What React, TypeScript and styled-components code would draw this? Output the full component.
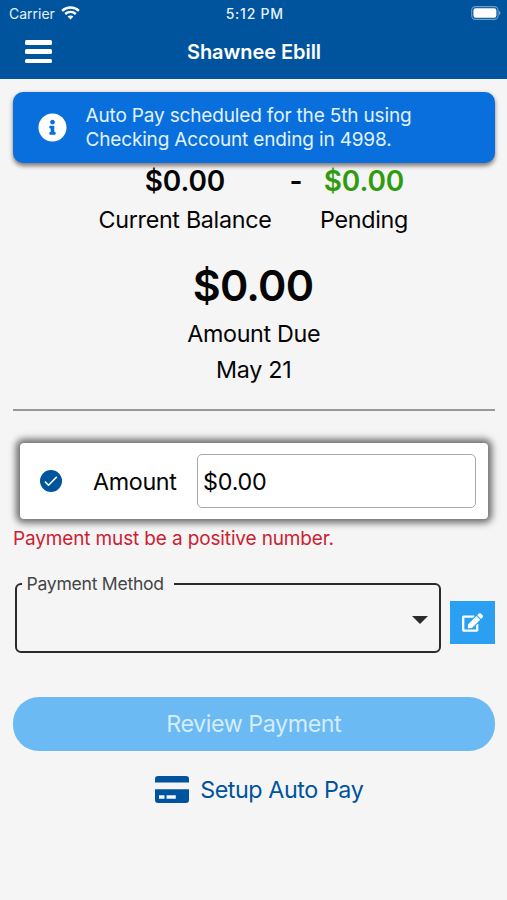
import React from "react";
import styled, { createGlobalStyle } from "styled-components";
import { FaEdit, FaInfoCircle } from "react-icons/fa";

const GlobalStyle = createGlobalStyle`
  *, *::before, *::after { box-sizing: border-box; }
  body {
    margin: 0;
    background: #f5f5f5;
    font-family: Inter, "Liberation Sans", sans-serif;
    color: #050505;
  }
`;

const Screen = styled.div`
  width: 507px;
  height: 900px;
  overflow: hidden;
  background: #f5f5f5;
  display: flex;
  flex-direction: column;
`;

const Header = styled.header`
  height: 79px;
  flex: none;
  background: #00539d;
  color: #fff;
`;

const StatusBar = styled.div`
  height: 26px;
  padding: 0 6.5px 0 9px;
  display: grid;
  grid-template-columns: 1fr auto 1fr;
  align-items: center;
  font-size: 14px;
  color: #e6f1fb;
`;

const Carrier = styled.span`
  display: flex;
  align-items: center;
  gap: 6px;
  padding-top: 1px;
`;

const Clock = styled.span`
  padding-top: 1px;
  font-weight: 500;
  letter-spacing: 0.75px;
`;

const BatteryIcon = styled.svg`
  justify-self: end;
`;

const NavBar = styled.div`
  height: 51px;
  padding: 0 25px;
  display: grid;
  grid-template-columns: 27px 1fr 27px;
  align-items: center;
`;

const MenuButton = styled.button`
  border: 0;
  padding: 0;
  height: 23px;
  background: none;
  display: flex;
  flex-direction: column;
  justify-content: space-between;

  span {
    width: 26.5px;
    height: 4.5px;
    border-radius: 1.5px;
    background: #fff;
  }
`;

const Title = styled.h1`
  margin: 0 0 0 1px;
  text-align: center;
  font-size: 20px;
  line-height: 26px;
  font-weight: 600;
  letter-spacing: -0.05px;
`;

const Content = styled.main`
  padding: 12.5px 12.5px 0 13px;
  display: flex;
  flex-direction: column;
`;

const Alert = styled.section`
  height: 71px;
  padding-left: 25px;
  display: flex;
  align-items: center;
  gap: 18.5px;
  border-radius: 10px;
  background: #096fdc;
  color: #e2f2ff;
  box-shadow: 0 2.5px 4px rgba(60, 40, 40, 0.6);
`;

const AlertText = styled.p`
  margin: 0;
  padding-top: 1px;
  font-size: 19px;
  line-height: 23.5px;
  letter-spacing: -0.16px;
`;

const Balances = styled.div`
  height: 77px;
  display: grid;
  grid-template-columns: 172px 50px 86px;
  justify-content: center;
  padding-right: 1.5px;
`;

const Balance = styled.div`
  display: flex;
  flex-direction: column;
  align-items: center;
`;

const Value = styled.span<{ $color?: string }>`
  height: 39px;
  line-height: 36px;
  font-size: 28px;
  font-weight: 600;
  letter-spacing: -0.1px;
  color: ${(p) => p.$color ?? "inherit"};
`;

const Caption = styled.span`
  height: 36.5px;
  line-height: 36.5px;
  font-size: 23.3px;
  white-space: nowrap;
  letter-spacing: -0.31px;
`;

const AmountDue = styled.div`
  height: 169px;
  padding-top: 18px;
  display: flex;
  flex-direction: column;
  align-items: center;
`;

const Total = styled.strong`
  height: 58px;
  line-height: 54px;
  margin-right: 1.5px;
  font-size: 43px;
  font-weight: 600;
  letter-spacing: -0.75px;
`;

const Divider = styled.hr`
  width: 100%;
  height: 2.5px;
  margin: 0;
  border: 0;
  background: #999;
`;

const AmountCard = styled.section`
  height: 76px;
  margin: 32px 7px 0;
  padding: 0 12px 0 20px;
  display: flex;
  align-items: center;
  border-radius: 4px;
  background: #fff;
  box-shadow: 0 0 7px 3.5px rgba(0, 0, 0, 0.56);
`;

const AmountLabel = styled.label`
  width: 104px;
  margin-left: 31px;
  font-size: 23.3px;
  letter-spacing: -0.35px;
`;

const AmountInput = styled.input`
  flex: 1;
  min-width: 0;
  height: 54px;
  padding: 0 5px;
  border: 1.5px solid #aaa;
  border-radius: 5px;
  background: #fff;
  color: #050505;
  font: 400 23.3px Inter, "Liberation Sans", sans-serif;
  letter-spacing: -0.2px;
  outline: none;
`;

const ErrorText = styled.p`
  height: 24px;
  margin: 7.5px 0 0;
  font-size: 19px;
  line-height: 24px;
  letter-spacing: -0.14px;
  color: #cb2233;
`;

const MethodRow = styled.div`
  margin: 21.5px 0 0 1.5px;
  display: flex;
  gap: 9px;
`;

const MethodField = styled.fieldset`
  width: 426px;
  height: 81px;
  margin: 0;
  padding: 0 11px 8px 5px;
  border: 2.4px solid #2b2b2d;
  border-radius: 6px;
  display: flex;
  align-items: center;
  justify-content: flex-end;
`;

const MethodLegend = styled.legend`
  width: 152px;
  height: 24px;
  padding: 0 0 0 5px;
  font-size: 17.6px;
  line-height: 24px;
  letter-spacing: -0.27px;
  color: #454547;
`;

const EditButton = styled.button`
  width: 45px;
  height: 43px;
  margin-top: 28.5px;
  padding: 0;
  border: 0;
  display: grid;
  place-items: center;
  background: #2b9ff1;
  color: #fff;
`;

const ReviewButton = styled.button`
  height: 53.5px;
  margin-top: 44px;
  padding: 0;
  border: 0;
  border-radius: 26px;
  background: #6bbaf3;
  color: #d5ecfc;
  font: 400 23.3px Inter, "Liberation Sans", sans-serif;
  letter-spacing: -0.45px;
`;

const AutoPayLink = styled.a`
  margin-top: 23px;
  height: 31px;
  display: flex;
  justify-content: center;
  align-items: center;
  gap: 11.5px;
  padding-left: 10.5px;
  color: #00539d;
  font-size: 23.3px;
  letter-spacing: -0.43px;
`;

const WifiIcon = () => (
  <svg width="19" height="15" viewBox="0 0 19 15" fill="none" stroke="#fff" strokeWidth="2.4">
    <path d="M1.1 4.8C5.8.3 13.2.3 17.9 4.8" />
    <path d="M4.2 8C7.2 5.2 11.8 5.2 14.8 8" />
    <path d="M6.6 10.500 9.500 13.500l2.900-3C10.800 9 8.200 9 6.600 10.500Z" fill="#fff" stroke="none" />
  </svg>
);

const Battery = () => (
  <BatteryIcon width="30" height="14" viewBox="0 0 30 14">
    <rect x=".7" y=".6" width="26.4" height="12.8" rx="3.8" fill="none" stroke="#6f9fca" strokeWidth="1.1" />
    <rect x="2.4" y="2.3" width="23" height="9.4" rx="2.2" fill="#fff" />
    <path d="M28 4.800c2 .8 2 3.600 0 4.400Z" fill="#6f9fca" />
  </BatteryIcon>
);

const CheckIcon = () => (
  <svg width="22" height="22" viewBox="0 0 22 22">
    <circle cx="11" cy="11" r="11" fill="#00539d" />
    <path d="m4.900 11.600 3.600 3.600 8.300-8.300" fill="none" stroke="#fff" strokeWidth="1.6" />
  </svg>
);

const CaretIcon = () => (
  <svg width="16" height="8" viewBox="0 0 16 8">
    <path d="M0 0h16L8 8Z" fill="#2b2b2d" />
  </svg>
);

const CardIcon = () => (
  <svg width="34" height="27" viewBox="0 0 34 27" fill="#00539d">
    <path d="M0 6.500V3a3 3 0 0 1 3-3h28a3 3 0 0 1 3 3v3.500Z" />
    <path
      fillRule="evenodd"
      d="M0 13.300h34V24a3 3 0 0 1-3 3H3a3 3 0 0 1-3-3ZM4 19.200v3.600h5.500v-3.600ZM11.500 19.200v3.600h9.300v-3.600Z"
    />
  </svg>
);

export default function App() {
  return (
    <>
      <GlobalStyle />
      <Screen>
        <Header>
          <StatusBar>
            <Carrier>
              Carrier
              <WifiIcon />
            </Carrier>
            <Clock>5:12 PM</Clock>
            <Battery />
          </StatusBar>
          <NavBar>
            <MenuButton aria-label="Menu">
              <span />
              <span />
              <span />
            </MenuButton>
            <Title>Shawnee Ebill</Title>
          </NavBar>
        </Header>
        <Content>
          <Alert>
            <FaInfoCircle size={29} color="#fff" />
            <AlertText>
              Auto Pay scheduled for the 5th using
              <br />
              Checking Account ending in 4998.
            </AlertText>
          </Alert>
          <Balances>
            <Balance>
              <Value>$0.00</Value>
              <Caption>Current Balance</Caption>
            </Balance>
            <Balance>
              <Value>-</Value>
            </Balance>
            <Balance>
              <Value $color="#319b10">$0.00</Value>
              <Caption>Pending</Caption>
            </Balance>
          </Balances>
          <AmountDue>
            <Total>$0.00</Total>
            <Caption>Amount Due</Caption>
            <Caption>May 21</Caption>
          </AmountDue>
          <Divider />
          <AmountCard>
            <CheckIcon />
            <AmountLabel htmlFor="amount">Amount</AmountLabel>
            <AmountInput id="amount" defaultValue="$0.00" />
          </AmountCard>
          <ErrorText>Payment must be a positive number.</ErrorText>
          <MethodRow>
            <MethodField>
              <MethodLegend>Payment Method</MethodLegend>
              <CaretIcon />
            </MethodField>
            <EditButton aria-label="Edit">
              <FaEdit size={21} />
            </EditButton>
          </MethodRow>
          <ReviewButton>Review Payment</ReviewButton>
          <AutoPayLink>
            <CardIcon />
            Setup Auto Pay
          </AutoPayLink>
        </Content>
      </Screen>
    </>
  );
}
